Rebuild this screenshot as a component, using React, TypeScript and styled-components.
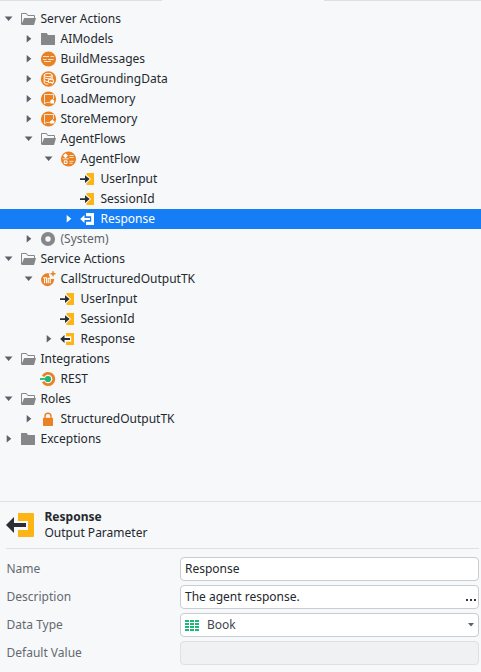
import React from "react";
import styled, { createGlobalStyle } from "styled-components";

const GlobalStyle = createGlobalStyle`
  *, *::before, *::after { box-sizing: border-box; }
  body {
    margin: 0;
    background: #f6f8fa;
    color: #25282d;
    font-family: "Noto Sans", sans-serif;
    font-size: 12px;
    overflow: hidden;
  }
`;

const Shell = styled.div`
  display: flex;
  flex-direction: column;
  width: 481px;
  height: 672px;
  overflow: hidden;
  background: #f6f8fa;
`;

const TabEdge = styled.div`
  display: flex;
  justify-content: space-between;
  flex: none;
  height: 9px;
`;

const EdgeLine = styled.div<{ $width: number }>`
  width: ${(p) => p.$width}px;
  height: 1px;
  background: #dee0e3;
`;

const Tree = styled.ul`
  flex: 1;
  margin: 0;
  padding: 0;
  list-style: none;
`;

const TreeRow = styled.li<{ $level: number; $selected?: boolean; $muted?: boolean }>`
  display: flex;
  align-items: center;
  height: 20px;
  padding-left: ${(p) => p.$level * 20}px;
  background: ${(p) => (p.$selected ? "#157df5" : "transparent")};
  color: ${(p) => (p.$selected ? "#fff" : p.$muted ? "#5f6369" : "#25282d")};
`;

const ArrowSlot = styled.span<{ $selected?: boolean }>`
  display: flex;
  width: 20px;
  height: 20px;
  flex: none;
  color: ${(p) => (p.$selected ? "#fff" : "#5b626b")};
`;

const IconSlot = styled.span`
  display: flex;
  width: 20.5px;
  height: 20px;
  flex: none;
`;

const Label = styled.span`
  line-height: 20px;
  white-space: nowrap;
`;

const Panel = styled.section`
  display: flex;
  flex-direction: column;
  flex: none;
  height: 171px;
  border-top: 1px solid #dee0e3;
`;

const PanelHeader = styled.header`
  display: flex;
  align-items: center;
  height: 47px;
  margin: 0 2px 0 6px;
  border-bottom: 1px solid #dee0e3;
`;

const HeaderIcon = styled.span`
  display: flex;
  width: 38.5px;
`;

const HeaderText = styled.div`
  display: flex;
  flex-direction: column;
  line-height: 16px;
`;

const Title = styled.strong`
  font-weight: 700;
`;

const Form = styled.div`
  display: grid;
  grid-template-columns: 173.5px 299px;
  grid-auto-rows: 24px;
  row-gap: 4px;
  padding: 8px 2px 0 6.5px;
`;

const FieldLabel = styled.label`
  line-height: 23px;
  color: #65696e;
`;

const FieldBox = styled.div<{ $disabled?: boolean }>`
  display: flex;
  align-items: center;
  padding: 0 3px 0 4px;
  border: 1px solid ${(p) => (p.$disabled ? "#dee0e3" : "#c9ccd1")};
  border-radius: 4px;
  background: ${(p) => (p.$disabled ? "#eff1f3" : "#fff")};
`;

const FieldValue = styled.span<{ $soft?: boolean }>`
  flex: 1;
  line-height: 22px;
  color: ${(p) => (p.$soft ? "#43474c" : "#25282d")};
`;

const TypeIcon = styled.span`
  display: flex;
  width: 22px;
`;

const Dots = styled.span`
  display: flex;
  gap: 2px;
  padding-top: 6px;
  margin-right: -1px;
`;

const Dot = styled.i`
  width: 2px;
  height: 2px;
  background: #34383d;
`;

type IconName =
  | "open" | "folder" | "message" | "data" | "load" | "store" | "flow"
  | "input" | "output" | "system" | "service" | "rest" | "lock";

const ORANGE = "#e98224";
const YELLOW = "#fdb515";
const DARK = "#2b2e33";
const GREY = "#85878a";

function Arrow({ open }: { open: boolean }) {
  return (
    <svg width="20" height="20" viewBox="0 0 20 20" fill="currentColor">
      {open ? <path d="M4.7 7.5h7.8L8.6 12z" /> : <path d="M6.7 6v7.4l4.6-3.7z" />}
    </svg>
  );
}

function Glyph({ name, selected }: { name: IconName; selected?: boolean }) {
  switch (name) {
    case "open":
      return (
        <>
          <path d="M1.5 15V4.5h5l1.2 2h6.8v3" fill="none" stroke={GREY} />
          <path d="M4.2 9H16l-2 7H1.2z" fill={GREY} />
        </>
      );
    case "folder":
      return <path d="M1 4h5.7L8 6h7v10H1z" fill={GREY} />;
    case "message":
      return (
        <>
          <circle cx="8.5" cy="10" r="7.6" fill={ORANGE} />
          <path d="M3 7.5h6M10.5 7.5H14M3 10.5h3.5M8 10.5h5.5M4 12.5h7" stroke="#fff" strokeWidth=".9" opacity=".85" />
        </>
      );
    case "data":
      return (
        <>
          <circle cx="8.5" cy="10" r="7.7" fill={ORANGE} />
          <g fill="none" stroke="#fff" strokeWidth=".95">
            <ellipse cx="8.2" cy="6" rx="4" ry="1.6" />
            <path d="M4.2 6v7.5c0 1 1.5 1.6 4 1.6M12.2 6v4M4.2 8.5c.5 1.2 5 1.6 8 0M4.2 11.1c.5 1 2 1.4 4 1.4M8.5 10.6h4.8v3H8.5zM10.5 12.8l2.7 2.5" />
          </g>
        </>
      );
    case "load":
    case "store":
      return (
        <>
          <circle cx="8.5" cy="10" r="7.6" fill={ORANGE} />
          <path d="M9.7 13.5H6.3l-1.8 1.3V5.5h9v4.6" fill="none" stroke="#fff" strokeWidth=".9" opacity=".85" />
          {name === "load" ? (
            <path d="M10 12 12.4 10l1.7 1.6v2.9h-3.6z" fill="#fff" />
          ) : (
            <path d="M10 14.6v-2.7h1l1.4-1.7 1.3 1.7h.7v2.7z" fill="#fff" />
          )}
        </>
      );
    case "flow":
      return (
        <>
          <circle cx="8.5" cy="10" r="7.6" fill={ORANGE} />
          <path d="M5.5 4.2 8 6.8 5.5 9.3 3 6.8z" fill="#fff" />
          <path d="M9.5 6.5h4.2M9.5 8.5h4M9.5 12.3h4M9.5 14.3h3M2.5 9.8h6" stroke="#fff" strokeWidth=".85" opacity=".9" />
          <path d="M4.3 11.8h2.7v2.7H4.3z" fill="none" stroke="#fff" />
        </>
      );
    case "input":
      return (
        <>
          <path d="M6.5 4H14v12H6.5v-1.8l4.6-4.2-4.6-4.2z" fill={YELLOW} />
          <path d="M0 9.2h5V6.2L9.7 10.1 5 14v-2.9H0z" fill={DARK} />
        </>
      );
    case "output":
      return (
        <>
          <path d="M6 4h8v12H6v-3.2h5.2V7.2H6z" fill={selected ? "#fff" : YELLOW} />
          <path d="M10 9.1H4.5V6L0.2 10.1l4.3 4v-3H10z" fill={selected ? "#fff" : DARK} />
        </>
      );
    case "system":
      return <circle cx="8" cy="10" r="4.9" fill="none" stroke={GREY} strokeWidth="4.4" />;
    case "service":
      return (
        <>
          <path d="M9.5 4.5A6.5 6.5 0 1 0 14 10h-2.5a2 2 0 0 1-1.8-2.4 2.3 2.3 0 0 1-.2-3.1z" fill={ORANGE} />
          <path d="M3.2 8.7h3.3v5.6M4.5 9v5.3M8.2 14.3V9.2h2v5.1" stroke="#fff" strokeWidth="1.1" fill="none" />
          <path d="M13 2.3v5M10.5 4.8h5" stroke={ORANGE} strokeWidth="1.5" />
        </>
      );
    case "rest":
      return (
        <>
          <path d="M3.1 7.3a5.7 5.7 0 1 1 0 5.4" fill="none" stroke={ORANGE} strokeWidth="2.8" />
          <path d="M0 10h6" stroke="#1db877" strokeWidth="1.8" />
          <circle cx="8" cy="10" r="3.1" fill="#1db877" />
        </>
      );
    case "lock":
      return (
        <>
          <path d="M5 9.5V7.3a3 3 0 0 1 6 0v2.2" fill="none" stroke={ORANGE} strokeWidth="1.4" />
          <rect x="3" y="8.8" width="10" height="8.2" rx=".8" fill={ORANGE} />
        </>
      );
  }
}

function TreeIcon({ name, selected }: { name: IconName; selected?: boolean }) {
  return (
    <svg width="20" height="20" viewBox="0 0 20 20">
      <Glyph name={name} selected={selected} />
    </svg>
  );
}

interface Node {
  label: string;
  level: number;
  icon: IconName;
  open?: boolean;
  selected?: boolean;
  muted?: boolean;
}

const nodes: Node[] = [
  { label: "Server Actions", level: 0, icon: "open", open: true },
  { label: "AIModels", level: 1, icon: "folder", open: false },
  { label: "BuildMessages", level: 1, icon: "message", open: false },
  { label: "GetGroundingData", level: 1, icon: "data", open: false },
  { label: "LoadMemory", level: 1, icon: "load", open: false },
  { label: "StoreMemory", level: 1, icon: "store", open: false },
  { label: "AgentFlows", level: 1, icon: "open", open: true },
  { label: "AgentFlow", level: 2, icon: "flow", open: true },
  { label: "UserInput", level: 3, icon: "input" },
  { label: "SessionId", level: 3, icon: "input" },
  { label: "Response", level: 3, icon: "output", open: false, selected: true },
  { label: "(System)", level: 1, icon: "system", open: false, muted: true },
  { label: "Service Actions", level: 0, icon: "open", open: true },
  { label: "CallStructuredOutputTK", level: 1, icon: "service", open: true },
  { label: "UserInput", level: 2, icon: "input" },
  { label: "SessionId", level: 2, icon: "input" },
  { label: "Response", level: 2, icon: "output", open: false },
  { label: "Integrations", level: 0, icon: "open", open: true },
  { label: "REST", level: 1, icon: "rest" },
  { label: "Roles", level: 0, icon: "open", open: true },
  { label: "StructuredOutputTK", level: 1, icon: "lock", open: false },
  { label: "Exceptions", level: 0, icon: "folder", open: false },
];

export default function App() {
  return (
    <>
      <GlobalStyle />
      <Shell>
        <TabEdge>
          <EdgeLine $width={162} />
          <EdgeLine $width={157} />
        </TabEdge>
        <Tree>
          {nodes.map((n, i) => (
            <TreeRow key={i} $level={n.level} $selected={n.selected} $muted={n.muted}>
              <ArrowSlot $selected={n.selected}>
                {n.open !== undefined && <Arrow open={n.open} />}
              </ArrowSlot>
              <IconSlot>
                <TreeIcon name={n.icon} selected={n.selected} />
              </IconSlot>
              <Label>{n.label}</Label>
            </TreeRow>
          ))}
        </Tree>
        <Panel>
          <PanelHeader>
            <HeaderIcon>
              <svg width="28" height="26" viewBox="0 0 28 26">
                <path d="M12 1h15a1 1 0 0 1 1 1v22a1 1 0 0 1-1 1H12v-7h10V9H12z" fill={YELLOW} />
                <path d="M20 11H8V5L0 13l8 8v-6h12z" fill={DARK} />
              </svg>
            </HeaderIcon>
            <HeaderText>
              <Title>Response</Title>
              <span>Output Parameter</span>
            </HeaderText>
          </PanelHeader>
          <Form>
            <FieldLabel>Name</FieldLabel>
            <FieldBox><FieldValue>Response</FieldValue></FieldBox>
            <FieldLabel>Description</FieldLabel>
            <FieldBox>
              <FieldValue>The agent response.</FieldValue>
              <Dots><Dot /><Dot /><Dot /></Dots>
            </FieldBox>
            <FieldLabel>Data Type</FieldLabel>
            <FieldBox>
              <TypeIcon>
                <svg width="14" height="11" viewBox="0 0 14 11" fill="#1db877">
                  {[0, 3, 6, 9].map((y) =>
                    [0, 5, 10].map((x) => <rect key={`${x}-${y}`} x={x} y={y} width="4" height="2" />)
                  )}
                </svg>
              </TypeIcon>
              <FieldValue $soft>Book</FieldValue>
              <svg width="7" height="4" viewBox="0 0 7 4"><path d="M0 0h6L3 3.6z" fill="#5b626b" /></svg>
            </FieldBox>
            <FieldLabel>Default Value</FieldLabel>
            <FieldBox $disabled />
          </Form>
        </Panel>
      </Shell>
    </>
  );
}
